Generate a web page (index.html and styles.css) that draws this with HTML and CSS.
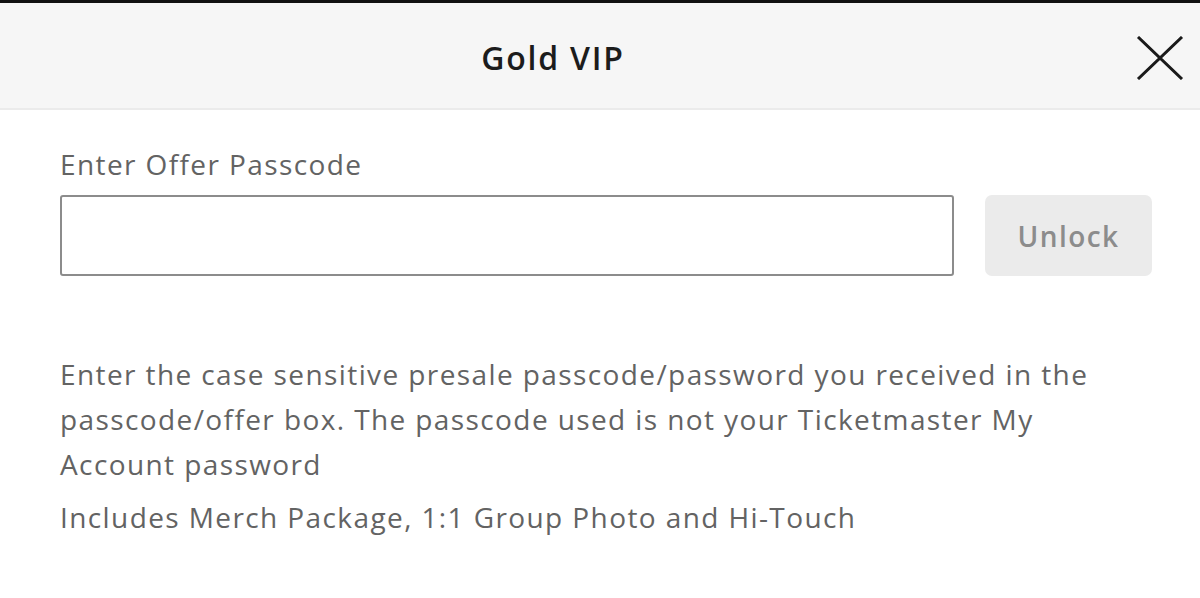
FILE: index.html
```html
<!DOCTYPE html>
<html>
<head>
<meta charset="utf-8">
<link rel="stylesheet" href="styles.css">
</head>
<body>
<div class="topbar"></div>
<header class="header">
  <h1 class="title">Gold VIP</h1>
  <button class="close" aria-label="Close">
    <svg width="48" height="44" viewBox="0 0 48 44"><path d="M2 1 L46 43 M46 1 L2 43" stroke="#1a1a1a" stroke-width="3" fill="none"/></svg>
  </button>
</header>
<main class="content">
  <label class="label">Enter Offer Passcode</label>
  <div class="row">
    <input class="input" type="text">
    <button class="unlock">Unlock</button>
  </div>
  <p class="desc">Enter the case sensitive presale passcode/password you received in the passcode/offer box. The passcode used is not your Ticketmaster My Account password</p>
  <p class="desc includes">Includes Merch Package, 1:1 Group Photo and Hi-Touch</p>
</main>
</body>
</html>
```
FILE: styles.css
```css
* { box-sizing: border-box; }
html, body { margin: 0; padding: 0; background: #fff; }
body { font-family: "Open Sans", Lato, sans-serif; width: 1200px; height: 598px; overflow: hidden; }
.topbar { height: 3px; background: #111; }
.header {
  height: 107px;
  background: #f6f6f6;
  border-bottom: 2px solid #ebebeb;
  display: flex;
  align-items: center;
  position: relative;
}
.title { margin: 0; padding-top: 4px; flex: 1; text-align: center; padding-right: 94px; font-size: 32px; font-weight: 600; color: #1c1c1c; letter-spacing: 1.8px; }
.close {
  position: absolute; right: 16px; top: 33px;
  background: none; border: 0; padding: 0; width: 48px; height: 44px;
}
.close svg { display: block; }
.content { padding: 36px 0 0 60px; }
.label { display: block; font-size: 28px; color: #636363; letter-spacing: 1.4px; line-height: 36px; }
.row { display: flex; gap: 31px; margin-top: 13px; }
.input {
  width: 894px; height: 81px;
  border: 2px solid #8c8c8c; border-radius: 3px; background: #fff;
}
.unlock {
  width: 167px; height: 81px;
  background: #ebebeb; border: 0; border-radius: 7px;
  font-family: inherit; font-size: 28px; font-weight: 600; color: #8c8c8c; letter-spacing: 1.4px;
}
.desc { margin: 0; font-size: 28px; line-height: 45px; color: #636363; letter-spacing: 1.4px; max-width: 1080px; }
.desc:first-of-type { margin-top: 76px; }
.includes { margin-top: 8px; }
```
